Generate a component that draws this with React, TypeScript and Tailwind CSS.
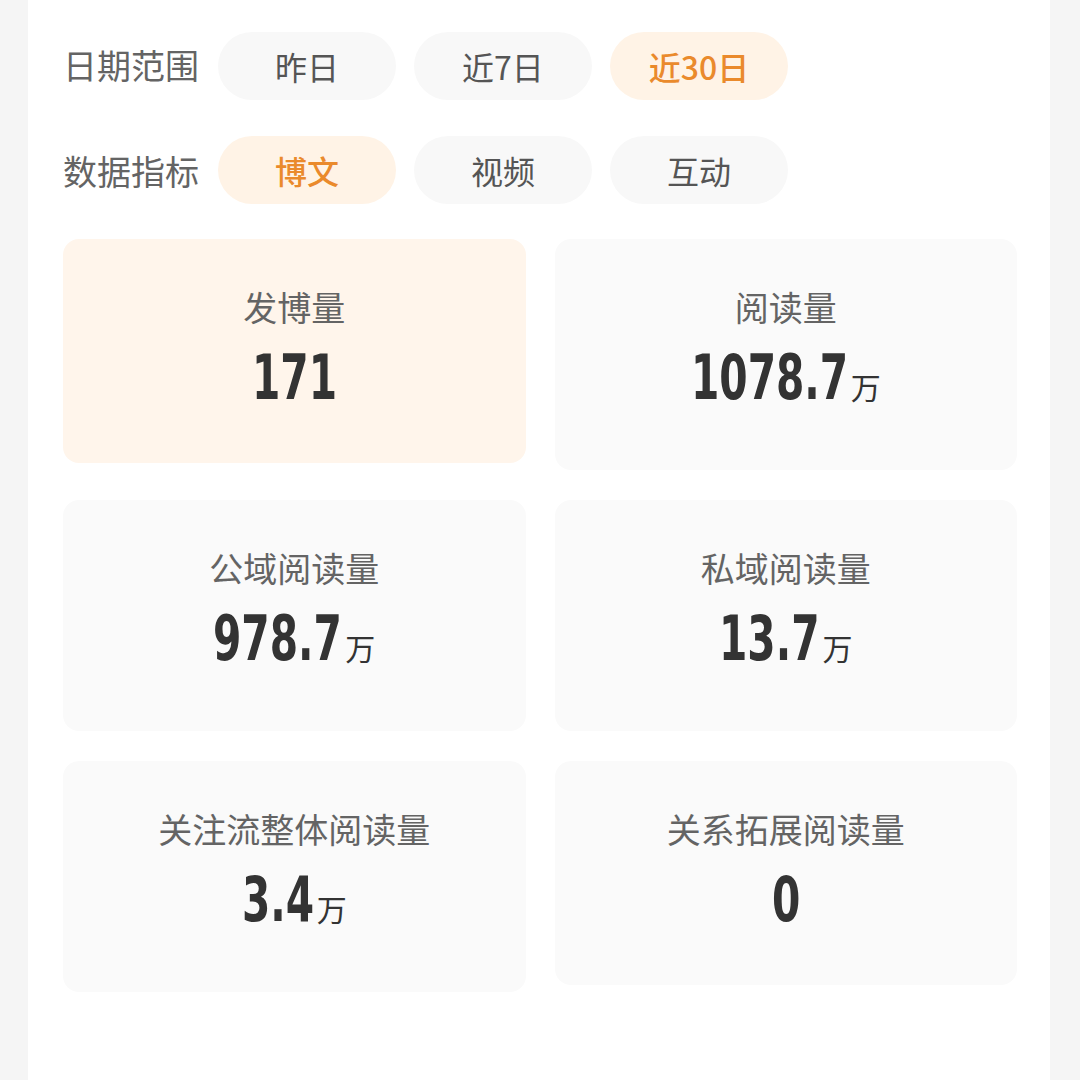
import React, { useLayoutEffect, useRef, useState } from "react";

const cjk = { fontFamily: '"Noto Sans CJK SC", "Noto Sans", sans-serif' };
const num = { fontFamily: '"DejaVu Sans Condensed", "DejaVu Sans", sans-serif' };

const SCALE = 0.73;

function Pill({ text, active }: { text: string; active?: boolean }) {
  return (
    <div
      className={
        "w-[178px] h-[68px] rounded-full flex items-center justify-center text-[32px] " +
        (active ? "bg-[#fff3e6] text-[#ea8a2c] font-medium" : "bg-[#f8f8f8] text-[#555555]")
      }
      style={cjk}
    >
      {text}
    </div>
  );
}

function Num({ value }: { value: string }) {
  const ref = useRef<HTMLSpanElement>(null);
  const [mr, setMr] = useState(0);
  useLayoutEffect(() => {
    if (ref.current) setMr(-ref.current.offsetWidth * (1 - SCALE));
  }, [value]);
  return (
    <span
      ref={ref}
      className="inline-block origin-left scale-x-[0.73] text-[62px] leading-[62px] font-bold text-[#333333]"
      style={{ ...num, marginRight: mr }}
    >
      {value}
    </span>
  );
}

function Card({ label, value, unit, active }: { label: string; value: string; unit?: string; active?: boolean }) {
  return (
    <div
      className={
        "rounded-[16px] flex flex-col items-center pt-[48px] " +
        (unit ? "h-[231px] " : "h-[224px] ") +
        (active ? "bg-[#fff5eb]" : "bg-[#fafafa]")
      }
    >
      <div className="text-[34px] leading-[40px] text-[#646464]" style={cjk}>
        {label}
      </div>
      <div className="flex items-baseline mt-[20px]">
        <Num value={value} />
        {unit && (
          <span className="text-[30px] leading-[30px] text-[#333333] ml-[3px]" style={cjk}>
            {unit}
          </span>
        )}
      </div>
    </div>
  );
}

export default function App() {
  return (
    <div className="w-[1080px] h-[1080px] bg-[#f5f5f5] flex overflow-hidden">
      <div className="ml-[28px] w-[1022px] h-full bg-white pl-[35px] pr-[33px] pt-[32px]">
        <div className="flex items-center gap-[18px]">
          <div className="w-[137px] text-[34px] text-[#646464] -mt-[4px]" style={cjk}>日期范围</div>
          <Pill text="昨日" />
          <Pill text="近7日" />
          <Pill text="近30日" active />
        </div>
        <div className="flex items-center gap-[18px] mt-[36px]">
          <div className="w-[137px] text-[34px] text-[#646464]" style={cjk}>数据指标</div>
          <Pill text="博文" active />
          <Pill text="视频" />
          <Pill text="互动" />
        </div>
        <div className="grid grid-cols-2 gap-x-[29px] gap-y-[30px] mt-[35px] items-start">
          <Card label="发博量" value="171" active />
          <Card label="阅读量" value="1078.7" unit="万" />
          <Card label="公域阅读量" value="978.7" unit="万" />
          <Card label="私域阅读量" value="13.7" unit="万" />
          <Card label="关注流整体阅读量" value="3.4" unit="万" />
          <Card label="关系拓展阅读量" value="0" />
        </div>
      </div>
    </div>
  );
}
